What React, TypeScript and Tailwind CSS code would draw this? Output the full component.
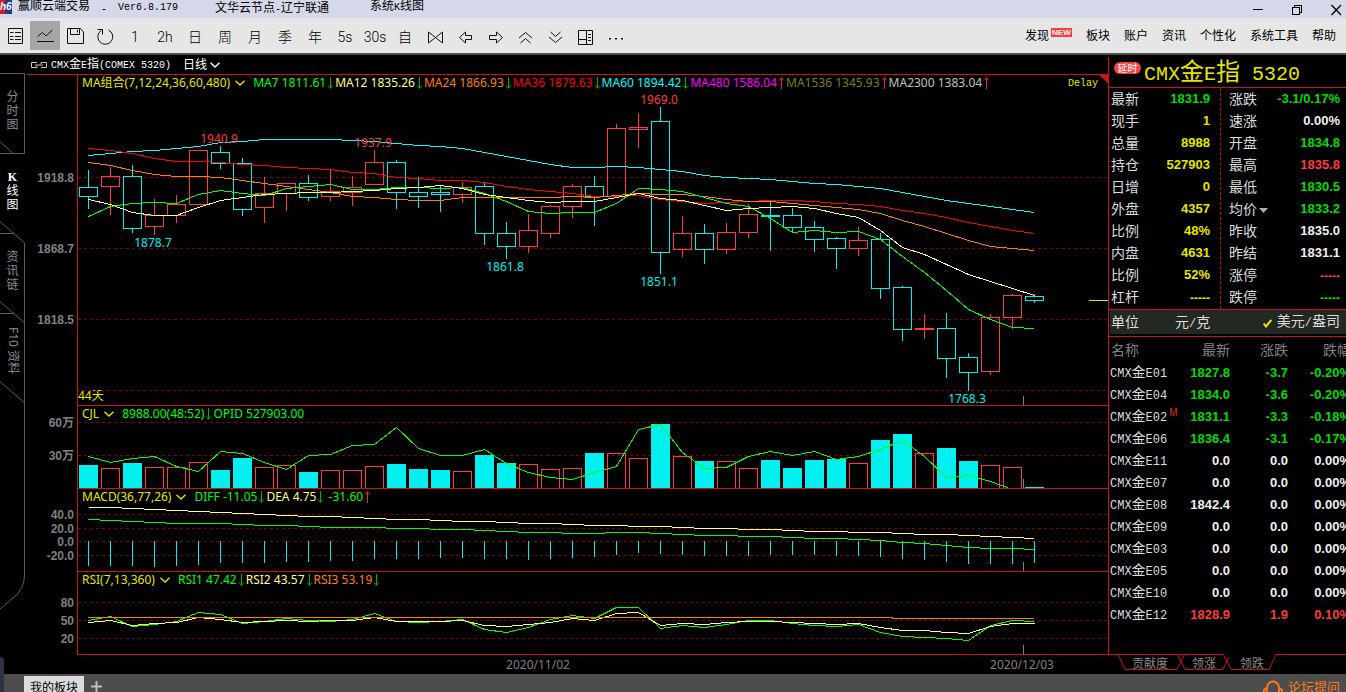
import { Fragment, ReactNode } from "react";
import clsx from "clsx";

const RED = "#ff3c3c";
const CYAN = "#00f0f0";
const GREEN = "#00ff00";
const YELLOW = "#ffff80";
const ORANGE = "#ff8000";

const STEP = 22;
const FIRST_X = 88;

// colour, wick top, body top, body bottom, wick bottom, volume top
type Candle = ["u" | "d", number, number, number, number, number];

const candles: Candle[] = [
  ["d", 170, 187, 196, 208, 465],
  ["u", 167, 176, 186, 214, 468],
  ["d", 165, 176, 228, 232, 463],
  ["u", 199, 215, 226, 234, 467],
  ["u", 195, 204, 215, 222, 467],
  ["u", 150, 150, 204, 204, 462],
  ["d", 146, 152, 163, 168, 470],
  ["d", 158, 163, 209, 215, 458],
  ["u", 177, 193, 207, 222, 467],
  ["u", 183, 183, 193, 210, 465],
  ["d", 175, 183, 197, 200, 472],
  ["u", 170, 191, 196, 200, 470],
  ["u", 176, 187, 192, 205, 470],
  ["u", 150, 162, 184, 184, 466],
  ["d", 160, 162, 192, 208, 464],
  ["d", 177, 192, 196, 207, 469],
  ["d", 186, 192, 194, 211, 470],
  ["u", 182, 187, 194, 202, 471],
  ["d", 183, 186, 233, 244, 455],
  ["d", 222, 233, 246, 258, 463],
  ["u", 214, 230, 246, 252, 464],
  ["u", 205, 206, 233, 237, 469],
  ["u", 184, 186, 206, 217, 468],
  ["d", 176, 186, 196, 225, 453],
  ["u", 124, 128, 196, 197, 453],
  ["u", 113, 127, 129, 147, 458],
  ["d", 107, 121, 252, 273, 424],
  ["u", 216, 233, 249, 256, 456],
  ["d", 224, 233, 249, 263, 461],
  ["u", 223, 232, 249, 253, 461],
  ["u", 204, 214, 232, 237, 468],
  ["d", 202, 215, 216, 250, 460],
  ["d", 208, 215, 227, 231, 468],
  ["d", 221, 227, 239, 251, 460],
  ["d", 237, 238, 248, 268, 459],
  ["u", 227, 240, 248, 255, 463],
  ["d", 233, 239, 288, 298, 440],
  ["d", 286, 287, 329, 340, 434],
  ["u", 314, 328, 329, 338, 453],
  ["d", 313, 328, 358, 377, 448],
  ["d", 353, 357, 372, 390, 461],
  ["u", 314, 317, 371, 374, 465],
  ["u", 294, 295, 317, 328, 467],
  ["d", 294, 296, 300, 302, 487],
];

const ma7 = [216, 206, 203, 202, 203, 194, 190, 193, 195, 188, 186, 184, 189, 189, 187, 187, 188, 187, 193, 201, 211, 213, 212, 212, 203, 188, 189, 191, 197, 203, 206, 218, 232, 230, 232, 231, 239, 256, 272, 290, 309, 319, 327, 328];
const ma12 = [199, 204, 212, 215, 215, 207, 200, 197, 194, 193, 192, 192, 191, 190, 188, 187, 185, 188, 194, 197, 200, 202, 201, 201, 197, 193, 198, 200, 205, 210, 208, 207, 206, 208, 213, 217, 230, 247, 254, 264, 274, 281, 288, 295];
const ma24 = [162, 165, 170, 174, 176, 176, 177, 180, 183, 186, 189, 192, 196, 197, 199, 200, 200, 197, 197, 197, 197, 197, 196, 197, 195, 193, 194, 194, 196, 199, 201, 201, 203, 205, 207, 209, 213, 220, 226, 233, 240, 246, 248, 250];
const ma36 = [148, 150, 153, 158, 161, 161, 162, 164, 165, 167, 168, 169, 172, 173, 177, 178, 180, 180, 182, 186, 189, 191, 193, 196, 196, 195, 199, 201, 203, 202, 201, 200, 200, 201, 203, 204, 206, 210, 213, 217, 222, 226, 230, 233];
const ma60 = [155, 153, 151, 150, 148, 146, 142, 141, 139, 139, 139, 139, 140, 141, 143, 145, 146, 148, 152, 156, 160, 164, 167, 167, 166, 167, 169, 171, 175, 177, 178, 179, 181, 183, 184, 186, 188, 192, 196, 200, 203, 206, 209, 212];
const opid = [456, 462, 458, 456, 466, 471, 451, 453, 462, 469, 455, 454, 445, 444, 427, 448, 455, 455, 449, 463, 472, 477, 479, 472, 466, 429, 424, 452, 468, 467, 456, 451, 455, 451, 459, 456, 449, 440, 456, 477, 475, 481, 489];
const dea = [507, 507, 508, 509, 510, 511, 512, 513, 514, 515, 516, 516, 517, 518, 519, 519, 520, 521, 521, 522, 523, 523, 524, 525, 525, 526, 526, 527, 528, 528, 529, 529, 530, 531, 531, 532, 532, 533, 534, 534, 535, 536, 537, 538];
const diff = [519, 520, 521, 522, 523, 523, 523, 524, 525, 525, 526, 527, 527, 527, 528, 528, 529, 529, 530, 531, 532, 532, 533, 533, 532, 532, 533, 534, 535, 535, 536, 536, 537, 538, 538, 539, 540, 542, 543, 545, 547, 548, 548, 549];
const hist = [566, 566, 566, 567, 566, 565, 563, 563, 563, 562, 562, 561, 561, 559, 559, 559, 558, 558, 559, 559, 560, 559, 558, 557, 555, 553, 554, 555, 556, 556, 556, 555, 555, 555, 556, 556, 557, 559, 560, 562, 564, 564, 564, 563];
const rsi1 = [620, 616, 626, 624, 621, 612, 614, 623, 621, 618, 620, 621, 619, 613, 621, 622, 621, 619, 629, 632, 627, 619, 615, 618, 607, 607, 628, 625, 627, 624, 620, 620, 623, 625, 626, 624, 632, 636, 637, 638, 640, 625, 620, 621];
const rsi2 = [622, 620, 625, 623, 622, 617, 619, 622, 621, 620, 621, 620, 620, 617, 621, 621, 621, 620, 625, 626, 624, 622, 618, 620, 613, 612, 625, 623, 624, 622, 621, 621, 622, 623, 624, 623, 627, 630, 630, 632, 633, 626, 623, 623];

const priceTags = [
  { text: "1940.9", x: 219, y: 143, color: RED },
  { text: "1878.7", x: 153, y: 247, color: CYAN },
  { text: "1937.9", x: 373, y: 147, color: RED },
  { text: "1861.8", x: 505, y: 271, color: CYAN },
  { text: "1969.0", x: 659, y: 104, color: RED },
  { text: "1851.1", x: 659, y: 286, color: CYAN },
  { text: "1768.3", x: 967, y: 403, color: CYAN },
];

const leftQuotes = [
  { label: "最新", value: "1831.9", color: "text-[#00dc00]" },
  { label: "现手", value: "1", color: "text-[#e6e600]" },
  { label: "总量", value: "8988", color: "text-[#e6e600]" },
  { label: "持仓", value: "527903", color: "text-[#e6e600]" },
  { label: "日增", value: "0", color: "text-[#e6e600]" },
  { label: "外盘", value: "4357", color: "text-[#e6e600]" },
  { label: "比例", value: "48%", color: "text-[#e6e600]" },
  { label: "内盘", value: "4631", color: "text-[#e6e600]" },
  { label: "比例", value: "52%", color: "text-[#e6e600]" },
  { label: "杠杆", value: "-----", color: "text-[#e6e600]" },
];

const rightQuotes = [
  { label: "涨跌", value: "-3.1/0.17%", color: "text-[#00dc00]" },
  { label: "速涨", value: "0.00%", color: "text-[#f0f0f0]" },
  { label: "开盘", value: "1834.8", color: "text-[#00dc00]" },
  { label: "最高", value: "1835.8", color: "text-[#ff3c3c]" },
  { label: "最低", value: "1830.5", color: "text-[#00dc00]" },
  { label: "均价", value: "1833.2", color: "text-[#00dc00]", menu: true },
  { label: "昨收", value: "1835.0", color: "text-[#f0f0f0]" },
  { label: "昨结", value: "1831.1", color: "text-[#f0f0f0]" },
  { label: "涨停", value: "-----", color: "text-[#ff3c3c]" },
  { label: "跌停", value: "-----", color: "text-[#00dc00]" },
];

const contracts = [
  { name: "CMX金E01", last: "1827.8", change: "-3.7", pct: "-0.20%" },
  { name: "CMX金E04", last: "1834.0", change: "-3.6", pct: "-0.20%" },
  { name: "CMX金E02", last: "1831.1", change: "-3.3", pct: "-0.18%", main: true },
  { name: "CMX金E06", last: "1836.4", change: "-3.1", pct: "-0.17%" },
  { name: "CMX金E11", last: "0.0", change: "0.0", pct: "0.00%" },
  { name: "CMX金E07", last: "0.0", change: "0.0", pct: "0.00%" },
  { name: "CMX金E08", last: "1842.4", change: "0.0", pct: "0.00%" },
  { name: "CMX金E09", last: "0.0", change: "0.0", pct: "0.00%" },
  { name: "CMX金E03", last: "0.0", change: "0.0", pct: "0.00%" },
  { name: "CMX金E05", last: "0.0", change: "0.0", pct: "0.00%" },
  { name: "CMX金E10", last: "0.0", change: "0.0", pct: "0.00%" },
  { name: "CMX金E12", last: "1828.9", change: "1.9", pct: "0.10%" },
];

const songSizes = {
  sm: { cjk: "text-[12px]", latin: "text-[10px]" },
  md: { cjk: "text-[14px]", latin: "text-[12px]" },
  lg: { cjk: "text-[24px]", latin: "text-[20px]" },
};

// Chinese text with half-width monospaced latin between the characters
function Song({ text, size = "sm" }: { text: string; size?: keyof typeof songSizes }) {
  const s = songSizes[size];
  return (
    <span className={clsx("whitespace-pre", s.cjk)}>
      {text.split(/([\x20-\x7e]+)/).map((part, i) =>
        i % 2 ? (
          <span key={i} className={clsx("font-['Liberation_Mono',monospace]", s.latin)}>{part}</span>
        ) : (
          <Fragment key={i}>{part}</Fragment>
        )
      )}
    </span>
  );
}

function Line({ data, color }: { data: number[]; color: string }) {
  return (
    <polyline
      points={data.map((y, i) => `${FIRST_X + i * STEP + 0.5},${y + 0.5}`).join(" ")}
      fill="none"
      stroke={color}
    />
  );
}

function Chevron() {
  return (
    <svg className="w-[10px] h-[6px] shrink-0" viewBox="0 0 10 6" fill="none" stroke="currentColor" strokeWidth="1.4">
      <path d="M.5 .7L5 5L9.5 .7" />
    </svg>
  );
}

function Trend({ up }: { up?: boolean }) {
  return (
    <svg className="w-[7px] h-3 shrink-0" viewBox="0 0 7 12" fill="none" stroke={up ? "#e03030" : "#00b400"}>
      <path d={up ? "M3.5 12V.5M1 3.5L3.5 .8L6 3.5" : "M3.5 0V11.5M1 8.5L3.5 11.2L6 8.5"} />
    </svg>
  );
}

function Legend({ title, items, children }: {
  title: string;
  items: { text: string; color: string; trend?: "up" | "down" }[];
  children?: ReactNode;
}) {
  return (
    <div className="relative flex items-center h-4 pl-1 pr-[10px] leading-4 text-[12px] whitespace-nowrap">
      <button className="flex items-center gap-[5px] mr-2 text-[#e6e600]">
        {title} <Chevron />
      </button>
      {items.map((item) => (
        <span key={item.text} className="flex items-center gap-px mr-px">
          <span className={item.color}>{item.text}</span>
          {item.trend && <Trend up={item.trend === "up"} />}
        </span>
      ))}
      {children}
    </div>
  );
}

interface PaneProps {
  top: number;
  height: string;
  ticks: { label: string; y: number }[];
  legend: ReactNode;
  edge?: ReactNode;
  children: ReactNode;
}

function Pane({ top, height, ticks, legend, edge, children }: PaneProps) {
  return (
    <div className={clsx("flex", height)}>
      <svg className="w-[50px] h-full shrink-0 overflow-visible" fill="#808080">
        {ticks.map((t) => (
          <text key={t.label} x="47" y={t.y - top + 5} textAnchor="end" className="text-[12px] font-bold font-['Liberation_Sans','Noto_Sans_CJK_SC',sans-serif]">
            {t.label}
          </text>
        ))}
      </svg>
      <div className="relative flex-1 min-w-0 border-l border-b border-[#c81414]">
        <svg className="absolute inset-0 w-full h-full" shapeRendering="crispEdges">
          {ticks.map((t) => (
            <line key={t.label} x1="0" x2="100%" y1={t.y - top + 0.5} y2={t.y - top + 0.5} stroke="#800000" strokeDasharray="3 3" />
          ))}
          <g transform={`translate(-78 ${-top})`}>{children}</g>
          <svg x="100%" y="0" className="overflow-visible">{edge}</svg>
        </svg>
        {legend}
      </div>
    </div>
  );
}

function ToolButton({ label, active, children }: { label: string; active?: boolean; children: ReactNode }) {
  return (
    <button
      aria-label={label}
      className={clsx("flex items-center justify-center w-[30px] h-[29px] shrink-0 text-[14px] font-light font-['Roboto','Noto_Sans_CJK_SC',sans-serif]", active && "bg-[#a6a6a6]")}
    >
      {children}
    </button>
  );
}

function Glyph({ d }: { d: string }) {
  return (
    <svg className="w-[30px] h-[29px]" viewBox="0 0 30 29" fill="none" stroke="#111">
      <path d={d} />
    </svg>
  );
}

const tools: { label: string; d?: string; text?: string; active?: boolean }[] = [
  { label: "报价", d: "M8.5 7.5H22.5V22.5H8.5ZM10 11.5H13.5M15 11.5H21M10 15.5H13.5M15 15.5H21M10 18.5H13.5M15 18.5H21" },
  { label: "K线", d: "M7.5 15.5L12.5 11.5L16 15L22.5 9M7 20.5H24", active: true },
  { label: "保存", d: "M7.5 7.5H20.5L23.5 11V22.5H7.5ZM10.5 7.5V13.5H19.5V7.5M17.5 9V11.5" },
  { label: "刷新", d: "M18.5 9A7.5 7.5 0 1 1 11.5 9.3M7.5 8.5H12.5V13.5" },
  { label: "1分钟", text: "1" },
  { label: "2小时", text: "2h" },
  { label: "日", text: "日" },
  { label: "周", text: "周" },
  { label: "月", text: "月" },
  { label: "季", text: "季" },
  { label: "年", text: "年" },
  { label: "5秒", text: "5s" },
  { label: "30秒", text: "30s" },
  { label: "自定义", text: "自" },
  { label: "对称", d: "M8.5 11V22L22.5 11V22Z" },
  { label: "左移", d: "M9.5 16.5L15.5 11V14.5H21.5V18.5H15.5V22Z" },
  { label: "右移", d: "M22.5 16.5L16.5 11V14.5H9.5V18.5H16.5V22Z" },
  { label: "放大", d: "M9 17L15.5 11.5L22 17M10.5 22L15.5 17.5L20.5 22" },
  { label: "缩小", d: "M9 16L15.5 21.5L22 16M10.5 11L15.5 15.5L20.5 11" },
  { label: "布局", d: "M8.5 9.5H22.5V23.5H8.5ZM16.5 9.5V23.5M8.5 18.5H16.5M18 13.5H21M18 16.5H21M18 19.5H21" },
  { label: "更多", d: "M9 18H11M15 18H17M21 18H23M9 17.5H11M15 17.5H17M21 17.5H23" },
];

function TitleBar() {
  return (
    <header className="flex h-[18px] bg-[#d5d8e8] text-black leading-3 overflow-hidden">
      <svg className="w-3 h-[14px] shrink-0" viewBox="0 0 12 14">
        <rect width="5" height="14" fill="#d02020" />
        <rect x="5" width="7" height="14" fill="#1c3f8c" />
        <text x="0" y="10" fill="#fff" className="text-[10px] font-bold italic font-['Liberation_Sans',sans-serif]">h6</text>
      </svg>
      <div className="flex pl-[6px]">
        <h1 className="flex w-[197px]">
          <Song text="赢顺云端交易" />
          <span className="px-[11px]"><Song text="-" /></span>
          <Song text="Ver6.8.179" />
        </h1>
        <span className="w-[155px]"><Song text="文华云节点-辽宁联通" /></span>
        <Song text="系统K线图" />
      </div>
      <div className="flex gap-[28px] ml-auto pr-[4px] pt-px">
        <button aria-label="最小化"><svg className="w-[11px] h-3" stroke="#000" shapeRendering="crispEdges"><path d="M0 5.5H10" /></svg></button>
        <button aria-label="还原"><svg className="w-[11px] h-3" fill="none" stroke="#000" shapeRendering="crispEdges"><path d="M.5 3.5H7.5V10.5H.5ZM2.5 3V1.5H9.5V8.5H8" /></svg></button>
        <button aria-label="关闭"><svg className="w-[11px] h-3" fill="none" stroke="#000" strokeWidth="1.3"><path d="M.5 1L10 11M10 1L.5 11" /></svg></button>
      </div>
    </header>
  );
}

function Toolbar() {
  return (
    <div className="flex items-center h-[37px] bg-[#e6e6e6] border-b-2 border-[#4d4d4d] text-black">
      <div className="flex">
        {tools.map((t) => (
          <ToolButton key={t.label} label={t.label} active={t.active}>
            {t.d ? <Glyph d={t.d} /> : <span className="pt-[3px]">{t.text}</span>}
          </ToolButton>
        ))}
      </div>
      <nav className="flex gap-[14px] ml-auto pr-[10px] text-[12px] leading-4 whitespace-nowrap">
        <a href="#discover" className="flex">
          发现
          <span className="w-[21px] h-[9px] ml-0.5 bg-[#ff3c3c] text-white text-[8px] leading-[9px] font-bold text-center font-['Liberation_Sans',sans-serif]">NEW</span>
        </a>
        <a href="#sector">板块</a>
        <a href="#account">账户</a>
        <a href="#news">资讯</a>
        <a href="#custom">个性化</a>
        <a href="#tools">系统工具</a>
        <a href="#help">帮助</a>
      </nav>
    </div>
  );
}

function SideTabs() {
  return (
    <nav className="relative flex flex-col w-[27px] pt-[18px] pr-[2px] shrink-0 text-[12px] text-[#8c8c8c]">
      <svg className="absolute left-0 top-0 w-[27px] h-full" fill="none" stroke="#5c5c5c">
        <path d="M0 18.5H24.5V98.5H0M0 86.5L13 98.5M0 166.5L24.5 188V520Q24.5 534 13 543L0 554M0 178.5H14M0 246.5L24.5 268M0 258.5H14M0 326.5L24.5 348" />
      </svg>
      {["分时图", "K线图", "资讯链"].map((tab) => (
        <button key={tab} className={clsx("relative flex flex-col items-center justify-center h-20 pb-[5px] leading-[14px]", tab === "K线图" && "text-white")}>
          {[...tab].map((ch) => (
            <span key={ch} className={clsx(ch === "K" && "font-bold font-['Liberation_Serif',serif]")}>{ch}</span>
          ))}
        </button>
      ))}
      <button className="relative flex items-center justify-center h-20 pb-[5px] leading-3 [writing-mode:vertical-rl] [text-orientation:sideways]">F10 资料</button>
    </nav>
  );
}

function Charts() {
  const dateTick = (y: number) => <line x1="1023.5" x2="1023.5" y1={y - 9} y2={y} stroke="#808080" />;
  return (
    <section className="flex flex-col flex-1 min-w-0">
      <div className="flex items-center h-5 pl-1 gap-1 border-b border-[#c81414] text-white leading-4">
        <svg className="w-4 h-2 shrink-0" viewBox="0 0 16 8" fill="none" stroke="#c8c8c8">
          <path d="M6 1.5H.5V6.5H6V5M10 3V1.5H15.5V6.5H10M4 4H12" />
        </svg>
        <Song text="CMX金E指(COMEX 5320)" />
        <button className="flex items-center gap-[3px] ml-2 text-[12px]">日线 <Chevron /></button>
      </div>

      <Pane
        top={75}
        height="h-[331px]"
        ticks={[{ label: "1918.8", y: 177 }, { label: "1868.7", y: 248 }, { label: "1818.5", y: 319 }]}
        edge={
          <>
            <path d="M-9 0H0V9Z" fill="#c81414" />
            <line x1="-19" x2="0" y1="225.5" y2="225.5" stroke="#e6e600" />
            <line x1="-1031" x2="0" y1="315.5" y2="315.5" stroke="#800000" strokeDasharray="3 3" />
          </>
        }
        legend={
          <Legend
            title="MA组合(7,12,24,36,60,480)"
            items={[
              { text: "MA7 1811.61", color: "text-[#00ff00]", trend: "down" },
              { text: "MA12 1835.26", color: "text-[#ffff80]", trend: "down" },
              { text: "MA24 1866.93", color: "text-[#ff8000]", trend: "down" },
              { text: "MA36 1879.63", color: "text-[#ff0000]", trend: "down" },
              { text: "MA60 1894.42", color: "text-[#00ffff]", trend: "down" },
              { text: "MA480 1586.04", color: "text-[#ff00ff]", trend: "up" },
              { text: "MA1536 1345.93", color: "text-[#808000]", trend: "up" },
              { text: "MA2300 1383.04", color: "text-[#c0c0c0]", trend: "up" },
            ]}
          >
            <span className="ml-auto text-[#e6e600]"><Song text="Delay" /></span>
          </Legend>
        }
      >
        {candles.map(([dir, high, top, bottom, low], i) => {
          const x = FIRST_X + i * STEP + 0.5;
          return (
            <g key={i} fill="none" stroke={dir === "u" ? RED : CYAN}>
              <path d={`M${x} ${high}V${top}M${x} ${bottom}V${low + 1}`} />
              <rect x={x - 9} y={top + 0.5} width="18" height={bottom - top} />
            </g>
          );
        })}
        <Line data={ma60} color="#00ffff" />
        <Line data={ma36} color="#ff0000" />
        <Line data={ma24} color={ORANGE} />
        <Line data={ma7} color={GREEN} />
        <Line data={ma12} color={YELLOW} />
        {priceTags.map((t) => (
          <text key={t.text} x={t.x} y={t.y} fill={t.color} textAnchor="middle" className="text-[12px]">{t.text}</text>
        ))}
        <text x="78" y="400" fill="#e6e600" className="text-[12px]">44天</text>
        {dateTick(405)}
      </Pane>

      <Pane
        top={406}
        height="h-[83px]"
        ticks={[{ label: "60万", y: 422 }, { label: "30万", y: 455 }]}
        legend={
          <Legend
            title="CJL"
            items={[
              { text: "8988.00(48:52)", color: "text-[#00ff00]", trend: "down" },
              { text: "OPID 527903.00", color: "text-[#00ff00]" },
            ]}
          />
        }
      >
        {candles.map(([dir, , , , , vol], i) =>
          dir === "u" ? (
            <path key={i} d={`M${FIRST_X + i * STEP - 8.5} 488V${vol + 0.5}h18V488`} fill="none" stroke={RED} />
          ) : (
            <rect key={i} x={FIRST_X + i * STEP - 9} y={vol} width="19" height={488 - vol} fill={CYAN} />
          )
        )}
        <Line data={opid} color={GREEN} />
        {dateTick(488)}
      </Pane>

      <Pane
        top={489}
        height="h-[83px]"
        ticks={[{ label: "40.0", y: 514 }, { label: "20.0", y: 528 }, { label: "0.0", y: 541 }, { label: "-20.0", y: 555 }]}
        legend={
          <Legend
            title="MACD(36,77,26)"
            items={[
              { text: "DIFF -11.05", color: "text-[#00ff00]", trend: "down" },
              { text: "DEA 4.75", color: "text-[#ffff80]", trend: "down" },
              { text: "\u00a0-31.60", color: "text-[#00ff00]", trend: "up" },
            ]}
          />
        }
      >
        <path d={hist.map((y, i) => `M${FIRST_X + i * STEP + 0.5} 541V${y}`).join("")} stroke={CYAN} />
        <Line data={dea} color={YELLOW} />
        <Line data={diff} color={GREEN} />
        {dateTick(571)}
      </Pane>

      <Pane
        top={572}
        height="h-[83px]"
        ticks={[{ label: "80", y: 602 }, { label: "50", y: 620 }, { label: "20", y: 638 }]}
        legend={
          <Legend
            title="RSI(7,13,360)"
            items={[
              { text: "RSI1 47.42", color: "text-[#00ff00]", trend: "down" },
              { text: "RSI2 43.57", color: "text-[#ffff80]", trend: "down" },
              { text: "RSI3 53.19", color: "text-[#ff8000]", trend: "down" },
            ]}
          />
        }
      >
        <Line data={rsi1} color={GREEN} />
        <Line data={rsi2} color={YELLOW} />
        <path d="M88 617.5H892V618.5H1034" fill="none" stroke={ORANGE} />
        {dateTick(654)}
      </Pane>

      <svg className="w-full h-[19px]" fill="#808080">
        <text x="511" y="14" textAnchor="middle" className="text-[12px]">2020/11/02</text>
        <text x="995" y="14" textAnchor="middle" className="text-[12px]">2020/12/03</text>
      </svg>
    </section>
  );
}

function QuoteList({ rows }: { rows: { label: string; value: string; color: string; menu?: boolean }[] }) {
  return (
    <dl>
      {rows.map((row, i) => (
        <div key={i} className="flex items-center justify-between h-[22px]">
          <dt className="flex items-center gap-0.5 pb-0.5 text-[14px] text-[#dcdcdc]">
            {row.label}
            {row.menu && (
              <svg className="w-[9px] h-[5px] mt-1" viewBox="0 0 9 5" fill="#b0b0b0"><path d="M0 0H9L4.5 5Z" /></svg>
            )}
          </dt>
          <dd className={clsx("font-bold font-['Liberation_Sans',sans-serif]", row.color, row.value === "-----" ? "pt-0.5 text-[12px]" : "text-[13px]")}>
            {row.value}
          </dd>
        </div>
      ))}
    </dl>
  );
}

function QuotePanel() {
  return (
    <aside className="flex flex-col w-[238px] shrink-0 mt-0.5 overflow-hidden">
      <div className="flex flex-col flex-1 border-l border-[#c81414]">
        <div className="flex h-[31px] pl-[5px] gap-[3px] border-b border-[#c81414]">
          <span className="w-[27px] h-3 mt-[5px] shrink-0 rounded-full bg-[#f04646] text-white text-[10px] leading-3 text-center">延时</span>
          <h2 className="leading-7 text-[#e6e600]"><Song text="CMX金E指 5320" size="lg" /></h2>
        </div>

        <div className="flex h-[222px] border-b border-[#c81414]">
          <div className="w-[112px] pl-0.5 pr-[10px] border-r border-dashed border-[#c81414]">
            <QuoteList rows={leftQuotes} />
          </div>
          <div className="flex-1 pl-2 pr-[6px]">
            <QuoteList rows={rightQuotes} />
          </div>
        </div>

        <div className="pb-0.5 pl-px border-b border-[#c81414]">
          <div className="flex items-center h-6 pl-px pr-[6px] pb-0.5 bg-[#232823] text-[#dcdcdc]">
            <span className="text-[14px]">单位</span>
            <button className="ml-9"><Song text="元/克" size="md" /></button>
            <button className="flex items-center gap-[5px] ml-auto">
              <svg className="w-[9px] h-[9px] mt-1" viewBox="0 0 9 9" fill="none" stroke="#e6e600" strokeWidth="2"><path d="M.7 4.5L3 7.5L8.3 1" /></svg>
              <Song text="美元/盎司" size="md" />
            </button>
          </div>
        </div>

        <table className="w-[242px] table-fixed text-right text-[13px] font-['Liberation_Sans',sans-serif]">
          <thead className="text-[14px] text-[#808080] font-['Noto_Sans_CJK_SC',sans-serif]">
            <tr className="h-[25px]">
              <th className="w-[73px] p-0 pl-0.5 font-normal text-left">名称</th>
              <th className="w-[48px] p-0 font-normal">最新</th>
              <th className="w-[58px] p-0 font-normal">涨跌</th>
              <th className="w-[63px] p-0 font-normal">跌幅</th>
            </tr>
          </thead>
          <tbody>
            {contracts.map((c) => (
              <tr
                key={c.name}
                className={clsx("h-[22px] leading-5 font-bold", c.change.startsWith("-") ? "text-[#00dc00]" : c.change === "0.0" ? "text-[#f0f0f0]" : "text-[#ff3c3c]")}
              >
                <td className="p-0 pl-px text-left font-normal text-[#dcdcdc] whitespace-nowrap font-['Noto_Sans_CJK_SC',sans-serif]">
                  <div className="flex h-5 leading-4">
                    <Song text={c.name} size="md" />
                    {c.main && <span className="ml-0.5 text-[10px] leading-3 text-[#e03030] font-['Liberation_Sans',sans-serif]">M</span>}
                  </div>
                </td>
                <td className="p-0">{c.last}</td>
                <td className="p-0">{c.change}</td>
                <td className="p-0">{c.pct}</td>
              </tr>
            ))}
          </tbody>
        </table>
      </div>

      <div className="relative flex h-5 pl-6 gap-6 text-[12px] leading-4 text-[#8c8c8c]">
        <svg className="absolute inset-0 w-full h-full" fill="none" stroke="#c81414">
          <path d="M0 .5H115.5L123 15.5H161L168 .5H400M10 .5L17 15.5H69L76.5 .5M69.5 .5L77 15.5H115L121 3" />
        </svg>
        <button className="relative">贡献度</button>
        <button className="relative">领涨</button>
        <button className="relative">领跌</button>
      </div>
    </aside>
  );
}

export default function App() {
  return (
    <div className="relative flex flex-col min-h-screen bg-black font-['Noto_Sans','Noto_Sans_CJK_SC',sans-serif] overflow-hidden">
      <TitleBar />
      <Toolbar />
      <main className="flex flex-1">
        <SideTabs />
        <Charts />
        <QuotePanel />
      </main>
      <footer className="flex h-[18px] pl-6 pr-[6px] bg-[#4d4d4d] overflow-hidden">
        <button className="w-[60px] h-6 mt-0.5 shrink-0 bg-[#dcdcdc] text-black text-[12px] leading-5">我的板块</button>
        <button aria-label="添加板块" className="ml-[7px] h-6">
          <svg className="w-[11px] h-[11px]" viewBox="0 0 11 11" stroke="#c0c0c0" strokeWidth="2"><path d="M5.5 0V11M0 5.5H11" /></svg>
        </button>
        <a href="#forum" className="flex h-6 mt-[3px] ml-auto gap-[5px] text-[13px] leading-5 text-[#ff7818]">
          <svg className="w-5 h-5 mt-[3px]" viewBox="0 0 20 20" fill="none" stroke="currentColor" strokeWidth="2">
            <path d="M4 9V8A6 6.5 0 0 1 16 8V9M4 8.5H3.5A2.5 2.5 0 0 0 1 11V13A2.5 2.5 0 0 0 4 15ZM16 8.5H16.5A2.5 2.5 0 0 1 19 11V13A2.5 2.5 0 0 1 16 15Z" />
          </svg>
          论坛提问
        </a>
      </footer>
      <div className="absolute left-0 bottom-0 w-1 h-[35px] rounded-tr-sm bg-[#2c3444]" />
    </div>
  );
}
